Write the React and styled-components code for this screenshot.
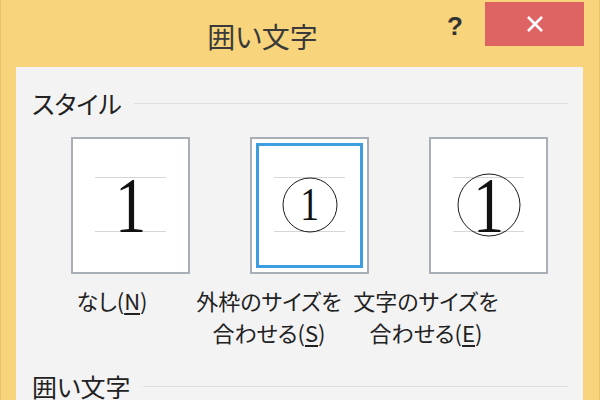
import styled, { createGlobalStyle } from "styled-components";

const GlobalStyle = createGlobalStyle`
  body {
    margin: 0;
    background: #f8d47c;
  }
`;

const jp = `"Noto Sans CJK JP", "Noto Sans", sans-serif`;

const Window = styled.div`
  width: 600px;
  height: 400px;
  overflow: hidden;
  background: #f8d47c;
  display: flex;
  flex-direction: column;
  box-sizing: border-box;
  border-left: 1px solid #eac468;
  border-right: 1px solid #eac468;
  font-family: ${jp};
  font-feature-settings: "palt";
  color: #222;
`;

const TitleBar = styled.div`
  height: 67px;
  flex-shrink: 0;
  display: flex;
  align-items: flex-start;
`;

const Title = styled.div`
  flex: 1;
  padding-left: 84px;
  margin-top: 22px;
  text-align: center;
  font-size: 28px;
  line-height: 29px;
  color: #3a3a3a;
`;

const Help = styled.div`
  width: 30px;
  margin-top: 13px;
  text-align: center;
  font-family: "Liberation Sans", Arial, sans-serif;
  font-weight: bold;
  font-size: 26px;
  line-height: 26px;
  color: #333;
`;

const Close = styled.div`
  width: 99px;
  height: 44px;
  margin: 2px 15px 0 15px;
  background: #de6464;
  display: flex;
  align-items: center;
  justify-content: center;
`;

const Panel = styled.div`
  flex: 1;
  margin: 0 16px 0 15px;
  background: #f3f3f3;
  padding: 22px 15px 0 16px;
`;

const SectionHead = styled.div`
  display: flex;
  align-items: center;
  gap: 12px;
  margin-top: ${(p) => p.$top || 0}px;
  font-size: 25px;
  line-height: 28px;
  color: #222;

  &::after {
    content: "";
    flex: 1;
    height: 1px;
    background: #dedede;
  }
`;

const BoxRow = styled.div`
  display: flex;
  gap: 60px;
  margin: 20px 0 0 39px;
`;

const Box = styled.div`
  width: 119px;
  height: 137px;
  box-sizing: border-box;
  border: 2px solid #a8afb6;
  background: #fff;
  padding: 38px 22px 0;
  box-shadow: ${(p) =>
    p.$selected ? "inset 0 0 0 4px #fff, inset 0 0 0 7px #3d9ddf" : "none"};
`;

const Guide = styled.div`
  position: relative;
  height: 53px;
  border-top: 1px solid #d6d6d6;
  border-bottom: 1px solid #d6d6d6;
  display: flex;
  align-items: center;
  justify-content: center;
`;

const Digit = styled.span`
  display: inline-block;
  font-family: "Liberation Serif", "Times New Roman", serif;
  font-size: ${(p) => p.$size}px;
  line-height: 53px;
  color: #111;
  transform: scaleX(0.8);
`;

const Ring = styled.span`
  position: absolute;
  left: 50%;
  top: 50%;
  width: ${(p) => p.$d}px;
  height: ${(p) => p.$d}px;
  transform: translate(-50%, -50%);
  box-sizing: border-box;
  border: 1.5px solid #1a1a1a;
  border-radius: 50%;
`;

const LabelRow = styled.div`
  display: flex;
  gap: 7px;
  margin: 10px 0 0 5px;
`;

const Label = styled.div`
  width: 150px;
  flex-shrink: 0;
  white-space: nowrap;
  text-align: center;
  font-size: 22px;
  line-height: 32px;
  color: #222;

  u {
    text-underline-offset: 3px;
  }
`;

const styles = [
  { label: <>なし(<u>N</u>)</>, size: 78 },
  {
    label: <>外枠のサイズを<br />合わせる(<u>S</u>)</>,
    size: 47,
    ring: 55,
    selected: true,
  },
  { label: <>文字のサイズを<br />合わせる(<u>E</u>)</>, size: 78, ring: 63 },
];

export default function App() {
  return (
    <>
      <GlobalStyle />
      <Window>
        <TitleBar>
          <Title>囲い文字</Title>
          <Help>?</Help>
          <Close>
            <svg width="18" height="16" viewBox="0 0 18 16">
              <path d="M2 1 L16 15 M16 1 L2 15" stroke="#fff" strokeWidth="2.6" />
            </svg>
          </Close>
        </TitleBar>
        <Panel>
          <SectionHead>スタイル</SectionHead>
          <BoxRow>
            {styles.map((s, i) => (
              <Box key={i} $selected={s.selected}>
                <Guide>
                  {s.ring && <Ring $d={s.ring} />}
                  <Digit $size={s.size}>1</Digit>
                </Guide>
              </Box>
            ))}
          </BoxRow>
          <LabelRow>
            {styles.map((s, i) => (
              <Label key={i}>{s.label}</Label>
            ))}
          </LabelRow>
          <SectionHead $top={24}>囲い文字</SectionHead>
        </Panel>
      </Window>
    </>
  );
}
